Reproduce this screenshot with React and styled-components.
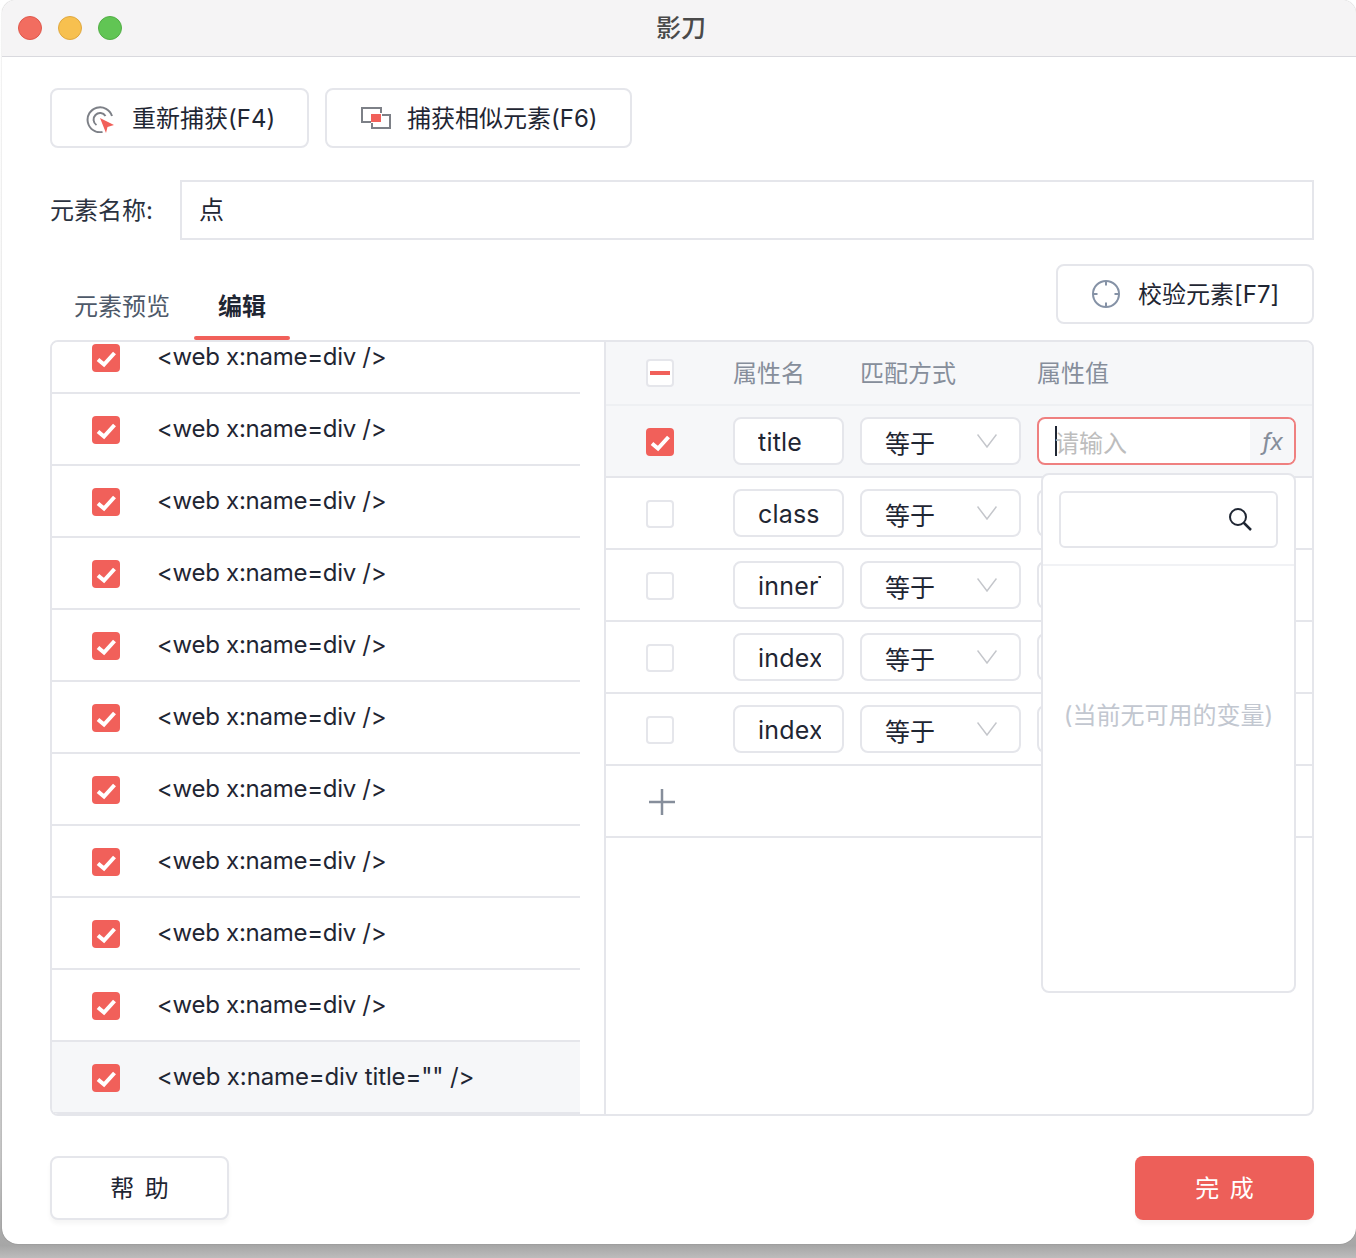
import React from "react";
import styled, { createGlobalStyle } from "styled-components";

const GlobalStyle = createGlobalStyle`
  * { box-sizing: border-box; }
  html, body { margin: 0; padding: 0; }
  body {
    width: 1356px;
    height: 1258px;
    overflow: hidden;
    background: linear-gradient(to bottom, #fff 0%, #eee 50%, #c4c4c4 92%, #a6a6a6 99%, #bcbcbc 100%);
    font-family: Inter, "Noto Sans CJK SC", sans-serif;
    font-size: 24px;
    color: #1f2633;
  }
`;

const Window = styled.div`
  margin-left: 2px;
  width: 1354px;
  height: 1244px;
  background: #fff;
  border-radius: 14px 14px 16px 16px;
  box-shadow: 0 0 1px rgba(0, 0, 0, 0.45);
  overflow: hidden;
  display: flex;
  flex-direction: column;
`;

const TitleBar = styled.div`
  position: relative;
  flex: none;
  height: 57px;
  background: #f5f4f5;
  border-bottom: 1px solid #d9d9de;
  display: flex;
  align-items: center;
  justify-content: center;
`;

const Lights = styled.div`
  position: absolute;
  left: 16px;
  top: 16px;
  display: flex;
  gap: 16px;
`;

const Light = styled.span`
  width: 24px;
  height: 24px;
  border-radius: 50%;
  background: ${(p) => p.$color};
  border: 1px solid ${(p) => p.$edge};
`;

const Title = styled.div`
  font-size: 25px;
  font-weight: 500;
  color: #4a4a4a;
  margin-left: 4px;
  margin-top: -5px;
`;

const Content = styled.div`
  flex: 1;
  padding: 31px 42px 24px 48px;
  display: flex;
  flex-direction: column;
`;

const Toolbar = styled.div`
  display: flex;
  gap: 16px;
`;

const Button = styled.button`
  width: ${(p) => p.$width}px;
  height: 60px;
  padding: 0 0 4px 34px;
  display: flex;
  align-items: center;
  gap: 18px;
  background: #fff;
  border: 2px solid #e5e6eb;
  border-radius: 8px;
  font: inherit;
  color: inherit;
  white-space: nowrap;

  svg {
    flex: none;
    margin-top: 4px;
  }
`;

const NameRow = styled.div`
  margin-top: 32px;
  display: flex;
  align-items: center;
`;

const NameLabel = styled.label`
  width: 130px;
  flex: none;
  padding-bottom: 4px;
  color: #2b3240;
`;

const NameInput = styled.div`
  flex: 1;
  height: 60px;
  padding: 0 0 4px 17px;
  display: flex;
  align-items: center;
  border: 2px solid #e5e6eb;
  font-size: 25px;
`;

const TabRow = styled.div`
  margin-top: 24px;
  height: 76px;
  display: flex;
  justify-content: space-between;
  align-items: flex-start;
`;

const Tabs = styled.div`
  display: flex;
  margin-top: 12px;
`;

const Tab = styled.div`
  position: relative;
  height: 64px;
  padding: 0 24px 8px;
  display: flex;
  align-items: center;
  color: ${(p) => (p.$active ? "#1f2633" : "#4e5969")};
  font-weight: ${(p) => (p.$active ? 700 : 400)};

  ${(p) =>
    p.$active &&
    `&::after {
      content: "";
      position: absolute;
      left: 0;
      right: 0;
      bottom: 0;
      height: 4px;
      border-radius: 2px;
      background: #f1605a;
    }`}
`;

const Panel = styled.div`
  height: 776px;
  display: flex;
  border: 2px solid #e5e6eb;
  border-radius: 8px;
  overflow: hidden;
`;

const LeftColumn = styled.div`
  flex: none;
  width: 554px;
  padding-right: 24px;
  border-right: 2px solid #e5e6eb;
  overflow: hidden;
`;

const ElementList = styled.div`
  margin-top: -20px;
`;

const ElementRow = styled.div`
  height: 72px;
  padding-left: 40px;
  display: flex;
  align-items: center;
  gap: 38px;
  border-bottom: 2px solid #e5e6eb;
  background: ${(p) => (p.$selected ? "#f6f7f9" : "#fff")};
  white-space: nowrap;
`;

const ElementText = styled.span`
  margin-top: -2px;
  margin-left: -1px;
  letter-spacing: ${(p) => (p.$long ? -0.13 : -0.28)}px;
`;

const CheckBox = styled.span`
  flex: none;
  width: 28px;
  height: 28px;
  margin-top: ${(p) => (p.$inHeader ? 0 : 2)}px;
  border-radius: 4px;
  display: flex;
  align-items: center;
  justify-content: center;
  background: ${(p) => (p.$checked ? "#f1605a" : "#fff")};
  border: ${(p) => (p.$checked ? "none" : "2px solid #e5e6eb")};
`;

const Dash = styled.span`
  width: 20px;
  height: 4px;
  background: #f1605a;
`;

const RightColumn = styled.div`
  flex: 1;
  min-width: 0;
`;

const AttrGrid = styled.div`
  display: grid;
  grid-template-columns: 87px 127px 177px 259px;
  align-items: center;
  padding-left: 40px;
`;

const HeaderRow = styled(AttrGrid)`
  height: 64px;
  background: #f6f7f9;
  border-bottom: 2px solid #eef0f3;
  color: #868e9b;
`;

const HeaderCell = styled.span`
  padding-bottom: 4px;
`;

const AttrRow = styled(AttrGrid)`
  height: 72px;
  border-bottom: 2px solid #e5e6eb;
  background: ${(p) => (p.$active ? "#f6f7f9" : "#fff")};
`;

const AddRow = styled.div`
  height: 72px;
  padding: 2px 0 0 42px;
  display: flex;
  align-items: center;
  border-bottom: 2px solid #e5e6eb;
`;

const Field = styled.div`
  height: 48px;
  display: flex;
  align-items: center;
  background: #fff;
  border: 2px solid #e5e6eb;
  border-radius: 8px;
`;

const NameField = styled(Field)`
  width: 111px;
  padding: 1px 21px 0 23px;
`;

const NameText = styled.span`
  display: block;
  overflow: hidden;
  white-space: nowrap;
  font-size: 25px;
  letter-spacing: 0.2px;
`;

const SelectField = styled(Field)`
  width: 161px;
  padding: 2px 22px 0 23px;
  justify-content: space-between;
  font-size: 25px;

  svg {
    margin-top: -2px;
  }
`;

const ValueCell = styled.div`
  position: relative;
  width: 259px;
`;

const ValueField = styled(Field)`
  overflow: hidden;
  border-color: ${(p) => (p.$focused ? "#ef8080" : "#e5e6eb")};
`;

const ValueInput = styled.div`
  flex: 1;
  height: 100%;
  padding-left: 16px;
  display: flex;
  align-items: center;
  color: #bdbdbd;
`;

const Caret = styled.span`
  width: 2px;
  height: 30px;
  margin-right: -2px;
  background: #1f2633;
`;

const FxBox = styled.div`
  width: 44px;
  height: 100%;
  display: flex;
  align-items: center;
  justify-content: center;
  background: #f6f7f9;
  color: #868e9b;
  font-style: italic;
  letter-spacing: -1px;
`;

const Popover = styled.div`
  position: absolute;
  left: 4px;
  right: 0;
  top: 56px;
  height: 520px;
  z-index: 2;
  display: flex;
  flex-direction: column;
  background: #fff;
  border: 2px solid #e5e6eb;
  border-radius: 8px;
`;

const SearchWrap = styled.div`
  flex: none;
  height: 91px;
  padding: 16px 16px 0;
  border-bottom: 2px solid #f1f2f5;
`;

const SearchBox = styled.div`
  height: 57px;
  padding: 0 24px 2px 0;
  display: flex;
  align-items: center;
  justify-content: flex-end;
  border: 2px solid #e5e6eb;
  border-radius: 6px;
`;

const EmptyText = styled.div`
  flex: 1;
  padding-bottom: 130px;
  display: flex;
  align-items: center;
  justify-content: center;
  color: #c2c7d0;
  white-space: nowrap;
`;

const Footer = styled.div`
  margin-top: 40px;
  display: flex;
  justify-content: space-between;
`;

const FooterButton = styled.button`
  width: 179px;
  height: 64px;
  padding: 0 0 4px;
  border-radius: 8px;
  font: inherit;
  word-spacing: 4px;
  color: ${(p) => (p.$primary ? "#fff" : "#1f2633")};
  background: ${(p) => (p.$primary ? "#ed5f59" : "#fff")};
  border: ${(p) => (p.$primary ? "none" : "2px solid #e5e6eb")};
  box-shadow: 0 4px 4px rgba(0, 0, 0, 0.04);
`;

const SimilarSvg = styled.svg`
  margin-right: -2px;
`;

const CheckMark = () => (
  <svg width="28" height="28" viewBox="0 0 28 28" fill="none">
    <path d="M6 15.5l6 5L22.5 9" stroke="#fff" strokeWidth="4" />
  </svg>
);

const CaptureIcon = () => (
  <svg width="28" height="30" viewBox="0 0 28 30" fill="none">
    <path d="M16.500 29A12.500 12.500 0 1 1 26 13" stroke="#7d8087" strokeWidth="2" />
    <path d="M10.500 22A6.500 6.500 0 1 1 19.500 13" stroke="#7d8087" strokeWidth="2" />
    <path d="M14 15l14 7-6.500 2L20 30z" fill="#f1605a" />
  </svg>
);

const SimilarIcon = () => (
  <SimilarSvg width="30" height="22" viewBox="0 0 30 22" fill="none">
    <path d="M20 6V1H1v14h9" stroke="#7d8087" strokeWidth="2" />
    <path d="M21 8h8v13H11v-5" stroke="#7d8087" strokeWidth="2" />
    <rect x="10" y="7" width="10" height="8" fill="#f1605a" />
  </SimilarSvg>
);

const TargetIcon = () => (
  <svg width="28" height="28" viewBox="0 0 28 28" fill="none" stroke="#8592a6" strokeWidth="2">
    <circle cx="14" cy="14" r="13" />
    <path d="M14 1v4.500M14 22.500V27M1 14h4.500M22.500 14H27" />
  </svg>
);

const Chevron = () => (
  <svg width="20" height="14" viewBox="0 0 20 14" fill="none">
    <path d="M0.500 0.500L10 13L19.500 0.500" stroke="#c4c6cb" strokeWidth="1.500" />
  </svg>
);

const SearchIcon = () => (
  <svg width="24" height="24" viewBox="0 0 24 24" fill="none" stroke="#1f2633" strokeWidth="2">
    <circle cx="10" cy="10" r="8" />
    <path d="M15.500 15.500L23 23" strokeWidth="2.500" />
  </svg>
);

const PlusIcon = () => (
  <svg width="28" height="28" viewBox="0 0 28 28" fill="none">
    <path d="M14 1v26M1 14h26" stroke="#868e9b" strokeWidth="2.500" />
  </svg>
);

const elements = Array.from({ length: 10 }, () => "<web x:name=div />");
elements.push('<web x:name=div title="" />');

const attrs = [
  { name: "title", checked: true },
  { name: "class" },
  { name: "innerText" },
  { name: "index" },
  { name: "index" },
];

export default function App() {
  return (
    <>
      <GlobalStyle />
      <Window>
        <TitleBar>
          <Lights>
            <Light $color="#f26d60" $edge="#e0584c" />
            <Light $color="#f7c04f" $edge="#e0a83f" />
            <Light $color="#61c554" $edge="#52ae45" />
          </Lights>
          <Title>影刀</Title>
        </TitleBar>
        <Content>
          <Toolbar>
            <Button $width={259}>
              <CaptureIcon />
              重新捕获(F4)
            </Button>
            <Button $width={307}>
              <SimilarIcon />
              捕获相似元素(F6)
            </Button>
          </Toolbar>
          <NameRow>
            <NameLabel>元素名称:</NameLabel>
            <NameInput>点</NameInput>
          </NameRow>
          <TabRow>
            <Tabs>
              <Tab>元素预览</Tab>
              <Tab $active>编辑</Tab>
            </Tabs>
            <Button $width={258}>
              <TargetIcon />
              校验元素[F7]
            </Button>
          </TabRow>
          <Panel>
            <LeftColumn>
              <ElementList>
                {elements.map((text, i) => (
                  <ElementRow key={i} $selected={i === elements.length - 1}>
                    <CheckBox $checked>
                      <CheckMark />
                    </CheckBox>
                    <ElementText $long={i === elements.length - 1}>{text}</ElementText>
                  </ElementRow>
                ))}
              </ElementList>
            </LeftColumn>
            <RightColumn>
              <HeaderRow>
                <CheckBox $inHeader>
                  <Dash />
                </CheckBox>
                <HeaderCell>属性名</HeaderCell>
                <HeaderCell>匹配方式</HeaderCell>
                <HeaderCell>属性值</HeaderCell>
              </HeaderRow>
              {attrs.map((attr, i) => (
                <AttrRow key={i} $active={attr.checked}>
                  <CheckBox $checked={attr.checked}>{attr.checked && <CheckMark />}</CheckBox>
                  <NameField>
                    <NameText>{attr.name}</NameText>
                  </NameField>
                  <SelectField>
                    等于
                    <Chevron />
                  </SelectField>
                  <ValueCell>
                    <ValueField $focused={i === 0}>
                      {i === 0 && (
                        <>
                          <ValueInput>
                            <Caret />
                            请输入
                          </ValueInput>
                          <FxBox>ƒx</FxBox>
                        </>
                      )}
                    </ValueField>
                    {i === 0 && (
                      <Popover>
                        <SearchWrap>
                          <SearchBox>
                            <SearchIcon />
                          </SearchBox>
                        </SearchWrap>
                        <EmptyText>(当前无可用的变量)</EmptyText>
                      </Popover>
                    )}
                  </ValueCell>
                </AttrRow>
              ))}
              <AddRow>
                <PlusIcon />
              </AddRow>
            </RightColumn>
          </Panel>
          <Footer>
            <FooterButton>帮 助</FooterButton>
            <FooterButton $primary>完 成</FooterButton>
          </Footer>
        </Content>
      </Window>
    </>
  );
}
